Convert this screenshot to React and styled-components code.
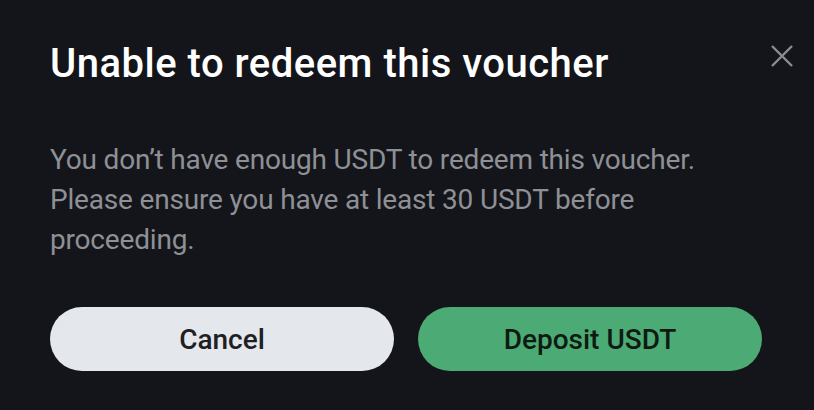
import React from 'react'
import styled, { createGlobalStyle } from 'styled-components'

const GlobalStyle = createGlobalStyle`
  html, body {
    margin: 0;
    padding: 0;
    background: #14151a;
  }
  body {
    font-family: Roboto, "Noto Sans", Arial, sans-serif;
    -webkit-font-smoothing: antialiased;
  }
`

const Dialog = styled.div`
  position: relative;
  box-sizing: border-box;
  width: 814px;
  height: 410px;
  padding: 42px 52px 0 50px;
  background: #14151a;
`

const Title = styled.h2`
  margin: 0;
  font-size: 40px;
  line-height: 44px;
  font-weight: 500;
  letter-spacing: 0.5px;
  color: #ffffff;
`

const CloseButton = styled.button`
  position: absolute;
  top: 43px;
  right: 19px;
  width: 26px;
  height: 26px;
  padding: 0;
  border: 0;
  background: none;
  color: #8a8c91;
  cursor: pointer;
  display: flex;
  align-items: center;
  justify-content: center;
`

const Message = styled.p`
  margin: 54px 0 0;
  font-size: 28px;
  line-height: 40px;
  font-weight: 400;
  letter-spacing: -0.18px;
  color: #8e9095;
`

const Actions = styled.div`
  display: grid;
  grid-template-columns: 1fr 1fr;
  gap: 24px;
  margin-top: 47px;
`

const Button = styled.button`
  height: 64px;
  border: 0;
  border-radius: 32px;
  font-family: inherit;
  font-size: 28px;
  font-weight: 500;
  cursor: pointer;
  background: ${(p) => (p.primary ? '#4cab74' : '#e4e7eb')};
  color: ${(p) => (p.primary ? '#0e1a12' : '#1f2023')};
`

const CloseIcon = () => (
  <svg width="22" height="22" viewBox="0 0 22 22" fill="none">
    <path d="M1 1L21 21M21 1L1 21" stroke="currentColor" strokeWidth="2.4" />
  </svg>
)

export default function App() {
  return (
    <>
      <GlobalStyle />
      <Dialog>
        <Title>Unable to redeem this voucher</Title>
        <CloseButton aria-label="Close">
          <CloseIcon />
        </CloseButton>
        <Message>
          You don’t have enough USDT to redeem this voucher.
          <br />
          Please ensure you have at least 30 USDT before
          <br />
          proceeding.
        </Message>
        <Actions>
          <Button>Cancel</Button>
          <Button primary>Deposit USDT</Button>
        </Actions>
      </Dialog>
    </>
  )
}
